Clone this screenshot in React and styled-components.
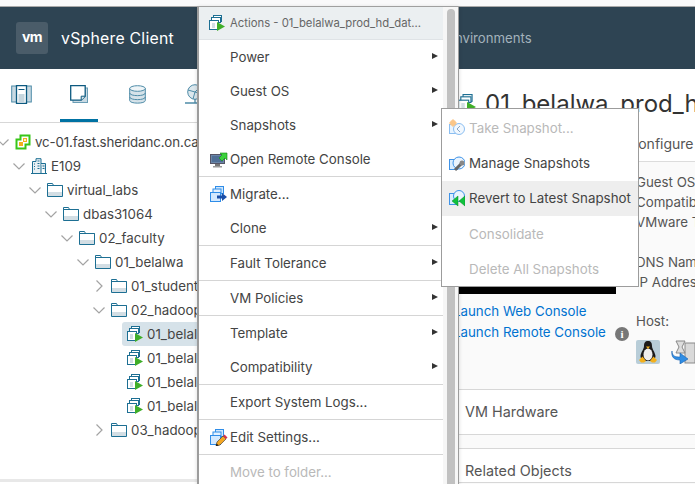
import styled, { createGlobalStyle } from "styled-components";

const GlobalStyle = createGlobalStyle`
  html, body {
    margin: 0;
    padding: 0;
    background: #fff;
  }
  body {
    width: 695px;
    height: 484px;
    overflow: hidden;
    font-family: Inter, "Noto Sans", sans-serif;
    color: #333;
  }
`;

const Page = styled.div`
  position: relative;
  display: flex;
  flex-direction: column;
  width: 695px;
  height: 484px;
  overflow: hidden;
  background: #fff;
`;

const TopStrip = styled.div`
  height: 6px;
  background: #f9f9fa;
  border-bottom: 1px solid #a9a9a9;
`;

const Header = styled.header`
  display: flex;
  align-items: center;
  height: 62px;
  flex-shrink: 0;
  background: #2e4453;
  padding-left: 16px;
`;

const LogoBox = styled.div`
  display: flex;
  align-items: center;
  justify-content: center;
  width: 32px;
  height: 32px;
  padding-bottom: 3px;
  box-sizing: border-box;
  border-radius: 3px;
  background: #4a5c69;
  color: #fff;
  font-size: 14px;
  font-weight: 700;
  letter-spacing: -0.6px;
`;

const Brand = styled.span`
  margin-left: 13px;
  color: #fff;
  font-size: 15.8px;
  letter-spacing: 0.25px;
`;

const HeaderLink = styled.span`
  margin-left: 273px;
  color: #a3b2bb;
  font-size: 13.2px;
`;

const Body = styled.div`
  display: flex;
  flex: 1;
  min-height: 0;
`;

const Sidebar = styled.aside`
  display: flex;
  flex-direction: column;
  width: 197px;
  height: 413px;
  flex-shrink: 0;
  overflow: hidden;
  border-bottom: 3px solid #e8e8e8;
  box-sizing: border-box;
`;

const TabBar = styled.div`
  display: flex;
  height: 54px;
  flex-shrink: 0;
  border-bottom: 1px solid #d7d7d7;
  box-sizing: border-box;
`;

const Tab = styled.div`
  display: flex;
  align-items: center;
  justify-content: center;
  width: 38px;
  margin-right: ${(p) => p.$gap}px;
  margin-left: ${(p) => p.$lead || 0}px;
  border-bottom: 3px solid ${(p) => (p.$active ? "#0072a3" : "transparent")};
  box-sizing: border-box;
  flex-shrink: 0;
`;

const Tree = styled.div`
  display: flex;
  flex-direction: column;
  padding-top: 7px;
`;

const TreeRow = styled.div`
  display: flex;
  align-items: center;
  height: 24px;
  padding-left: ${(p) => p.$level * 16}px;
  white-space: nowrap;
  font-size: 13.3px;
  color: #444;
`;

const Chevron = styled.svg`
  width: 16px;
  height: 16px;
  flex-shrink: 0;
  margin: 0 4.5px 0 -5.5px;
`;

const TreeIcon = styled.span`
  display: flex;
  width: 16px;
  height: 16px;
  margin-right: 4px;
  flex-shrink: 0;
`;

const Label = styled.span`
  line-height: 24px;
  letter-spacing: ${(p) => p.$tight ? "-0.12px" : "0"};
`;

const LeafWrap = styled.div`
  display: flex;
  align-items: center;
  flex: 1;
  height: 24px;
  margin-left: 10px;
  padding-left: 5px;
  background: ${(p) => (p.$selected ? "#d6e2e9" : "transparent")};
  border-radius: 3px 0 0 3px;
`;

const Main = styled.main`
  display: flex;
  flex-direction: column;
  flex: 1;
  min-width: 0;
  height: 416px;
  overflow: hidden;
  padding-left: 256px;
  background: #fafafa;
`;

const TitleBlock = styled.div`
  flex-shrink: 0;
  height: 93px;
  margin-left: -256px;
  padding-left: 261px;
  background: #fff;
  border-bottom: 1px solid #dcdcdc;
  box-sizing: border-box;
`;

const TitleRow = styled.div`
  display: flex;
  align-items: center;
  height: 34px;
  margin-top: 17px;
  white-space: nowrap;
`;

const TitleIcon = styled.span`
  display: flex;
  flex-shrink: 0;
  width: 18px;
  height: 18px;
`;

const Title = styled.h1`
  margin: 0 0 0 9px;
  font-size: 24px;
  font-weight: 400;
  color: #333;
`;

const TabsRow = styled.div`
  margin-top: 15px;
  margin-left: 170px;
  font-size: 14px;
  color: #555;
  white-space: nowrap;
`;

const Summary = styled.section`
  display: flex;
  flex-shrink: 0;
  height: 228px;
  margin-left: -256px;
  padding-left: 256px;
  background: #fafafa;
  border-bottom: 1px solid #d7d7d7;
  box-sizing: border-box;
  white-space: nowrap;
`;

const ConsoleCol = styled.div`
  display: flex;
  flex-direction: column;
  width: 163px;
  flex-shrink: 0;
`;

const Thumb = styled.div`
  height: 132px;
  background: #000;
`;

const ConsoleLink = styled.a`
  display: block;
  height: 21px;
  margin-top: ${(p) => p.$top || 0}px;
  line-height: 21px;
  color: #0072d0;
  font-size: 13.3px;
`;

const InfoDot = styled.span`
  display: flex;
  align-items: center;
  justify-content: center;
  width: 14px;
  height: 14px;
  margin: 165px 0 0 -1px;
  flex-shrink: 0;
  border-radius: 50%;
  background: #777;
  color: #fff;
  font-size: 11px;
  font-weight: 700;
  font-family: "Liberation Serif", serif;
`;

const DetailCol = styled.div`
  display: flex;
  flex-direction: column;
  margin-left: 7px;
  padding-top: 10px;
  font-size: 13.3px;
  color: #555;
`;

const DetailLine = styled.div`
  height: 20.2px;
  line-height: 20.2px;
  margin-bottom: ${(p) => p.$after || 0}px;
`;

const HostIcons = styled.div`
  display: flex;
  gap: 11px;
  margin-top: 9px;
`;

const HostBadge = styled.div`
  width: 24px;
  height: 24px;
  border-radius: 2px;
  background: ${(p) => p.$bg || "transparent"};
`;

const Card = styled.section`
  flex-shrink: 0;
  height: ${(p) => p.$height}px;
  margin: ${(p) => p.$top || 0}px 0 0 -256px;
  padding-left: 268px;
  background: #fff;
  border-bottom: 1px solid #d7d7d7;
  border-top: ${(p) => (p.$lined ? "1px solid #d7d7d7" : "none")};
  box-sizing: border-box;
  line-height: ${(p) => p.$line}px;
  font-size: 14.4px;
  color: #565656;
  white-space: nowrap;
`;

const Menu = styled.div`
  position: absolute;
  left: 197px;
  top: 7px;
  display: flex;
  width: 262px;
  height: 490px;
  background: #f6f6f6;
  border: solid #9c9c9c;
  border-width: 0 1px 0 2px;
  box-sizing: border-box;
  box-shadow: 0 0 4px rgba(0, 0, 0, 0.15);
`;

const MenuList = styled.div`
  display: flex;
  flex-direction: column;
  width: 244px;
  flex-shrink: 0;
  background: #fff;
`;

const MenuTitle = styled.div`
  display: flex;
  align-items: center;
  gap: 5px;
  height: 33px;
  flex-shrink: 0;
  padding-left: 10px;
  background: #ebeff1;
  border-bottom: 1px solid #dfe3e6;
  box-sizing: border-box;
  font-size: 11.3px;
  color: #666;
  white-space: nowrap;
`;

const MenuItem = styled.div`
  position: relative;
  display: flex;
  align-items: center;
  height: 34px;
  flex-shrink: 0;
  padding-left: 31px;
  font-size: 13.3px;
  color: ${(p) => (p.$disabled ? "#b9b9b9" : "#444")};
  white-space: nowrap;
`;

const MenuItemIcon = styled.span`
  position: absolute;
  left: 11px;
  top: 9px;
  display: flex;
  width: 18px;
  height: 17px;
`;

const Arrow = styled.span`
  position: absolute;
  right: 5px;
  top: 13px;
  width: 0;
  height: 0;
  border-left: 6px solid #333;
  border-top: 3.5px solid transparent;
  border-bottom: 3.5px solid transparent;
`;

const Divider = styled.div`
  height: 1px;
  flex-shrink: 0;
  background: #d5d5d5;
`;

const ScrollThumb = styled.div`
  width: 8px;
  height: 100%;
  margin: 2px 0 0 4px;
  border-radius: 4px 4px 0 0;
  background: #c1c1c1;
`;

const SubMenu = styled.div`
  position: absolute;
  left: 441px;
  top: 108px;
  display: flex;
  flex-direction: column;
  width: 198px;
  height: 179px;
  padding-top: 1px;
  background: #fff;
  border: 1px solid #9c9c9c;
  box-sizing: border-box;
`;

const SubItem = styled.div`
  display: flex;
  align-items: center;
  height: 35.4px;
  flex-shrink: 0;
  padding-left: 7px;
  background: ${(p) => (p.$active ? "#eeeeee" : "transparent")};
  font-size: 13.35px;
  color: ${(p) => (p.$disabled ? "#b9b9b9" : "#444")};
  white-space: nowrap;
`;

const SubIcon = styled.span`
  display: flex;
  width: 16px;
  height: 17px;
  margin-right: 4px;
  flex-shrink: 0;
  opacity: ${(p) => (p.$dim ? 0.6 : 1)};
`;

function ChevronMark({ open }) {
  return (
    <Chevron viewBox="0 0 16 16">
      <path
        d={open ? "M2.5 5.5L8 11l5.500-5.500" : "M5.500 2.500L11 8l-5.500 5.500"}
        fill="none"
        stroke="#a3a3a3"
        strokeWidth="1.2"
      />
    </Chevron>
  );
}

function FolderIcon() {
  return (
    <svg width="16" height="16" viewBox="0 0 16 16">
      <path d="M.5 14.500V1.500h5l1 2h9v11z" fill="#fff" stroke="#1d6f93" />
      <rect x="1" y="10" width="14" height="4" fill="#d3dee4" />
      <path d="M.5 3.500h15" stroke="#1d6f93" />
    </svg>
  );
}

function VmIcon({ size = 16 }) {
  return (
    <svg width={size} height={size} viewBox="0 0 16 16">
      <rect x="4.500" y=".5" width="8" height="6" fill="#fff" stroke="#1d6f93" />
      <rect x="2.500" y="2.500" width="9" height="5" fill="#fff" stroke="#1d6f93" />
      <rect x=".5" y="5.500" width="9" height="9" fill="#fff" stroke="#1d6f93" />
      <rect x="3" y="8" width="3" height="5" fill="#d3dee4" />
      <path d="M8 7l8 4.500-8 4.500z" fill="#3fae29" />
    </svg>
  );
}

function DatacenterIcon() {
  return (
    <svg width="16" height="16" viewBox="0 0 16 16">
      <path d="M1.500 15V3.500h3.500V.7h5V15" fill="#e9f0f4" stroke="#1d6f93" />
      <path d="M10 5.500h4.500V15" fill="#dfe8ed" stroke="#1d6f93" />
      <path d="M6.500 3h2M6.500 5.500h2M6.500 8h2M6.500 10.500h2M3 6h1M3 8.500h1M3 11h1M11.500 8h2M11.500 10.500h2" stroke="#1d6f93" />
      <path d="M0 15.500h16" stroke="#1d6f93" />
    </svg>
  );
}

function VcenterIcon() {
  return (
    <svg width="16" height="16" viewBox="0 0 16 16">
      <path d="M5.500 1.500h9v9h-4v4h-9v-9h4z" fill="#fff" stroke="#38c619" strokeWidth="2" />
      <rect x="8" y="4" width="4" height="4" fill="#f3b01c" />
      <rect x="4" y="8" width="4" height="4" fill="#f3b01c" />
      <rect x="9" y="5" width="2" height="2" fill="#fff2c4" />
    </svg>
  );
}

function HostsTabIcon() {
  return (
    <svg width="21" height="19" viewBox="0 0 21 19">
      <rect x=".7" y="1" width="19.600" height="16" fill="#c9dae3" stroke="#4f8ca8" />
      <path d="M5.500 .5h10v18h-10z" fill="#fff" stroke="#0d5a80" strokeWidth="1.300" />
      <rect x="7.500" y="9" width="6" height="8" fill="#c6d6de" />
      <path d="M7.500 4.500h6" stroke="#0d5a80" />
    </svg>
  );
}

function VmsTabIcon() {
  return (
    <svg width="18" height="18" viewBox="0 0 18 18">
      <rect x="3" y="3" width="14.500" height="14.500" fill="#c9dae3" stroke="#6a9db5" />
      <path d="M.7.7h14.500v10.500l-4 4H.7z" fill="#fff" stroke="#0d5a80" strokeWidth="1.300" />
      <path d="M15.200 11.200h-4v4" fill="#d8e4ea" stroke="#0d5a80" />
    </svg>
  );
}

function StorageTabIcon() {
  return (
    <svg width="17" height="19" viewBox="0 0 17 19">
      <path d="M.7 3.500v12c0 3.500 15.600 3.500 15.600 0v-12z" fill="#d5e2e9" stroke="#4f8ca8" />
      <ellipse cx="8.500" cy="3.500" rx="7.800" ry="2.800" fill="#eef4f7" stroke="#4f8ca8" />
      <path d="M.7 8c0 3.500 15.600 3.500 15.600 0M.7 12c0 3.500 15.600 3.500 15.600 0" fill="none" stroke="#4f8ca8" />
    </svg>
  );
}

function NetworkTabIcon() {
  return (
    <svg width="20" height="20" viewBox="0 0 20 20">
      <circle cx="10" cy="8" r="7.300" fill="#dbe7ed" stroke="#4f8ca8" />
      <path d="M3 6l7 2 5-5M10 8l-2 7M10 8l7 2" fill="none" stroke="#4f8ca8" />
      <path d="M0 19h20M10 15v4" stroke="#4f8ca8" strokeWidth="1.300" />
    </svg>
  );
}

function BlueStack() {
  return (
    <>
      <rect x="5.500" y=".5" width="8" height="7" fill="#cfe6fd" stroke="#2f8de8" />
      <rect x="3" y="3" width="8" height="6" fill="#e4f1ff" stroke="#2f8de8" />
      <rect x=".5" y="6.500" width="10" height="9" fill="#d3e9ff" stroke="#2f8de8" />
    </>
  );
}

function ConsoleIcon() {
  return (
    <svg width="18" height="17" viewBox="0 0 18 17">
      <rect x=".5" y="3.500" width="14" height="9" fill="#6a86a8" stroke="#556" />
      <rect x="2" y="5" width="11" height="6" fill="#4f6f96" />
      <rect x="5" y="13" width="5" height="2" fill="#777" />
      <rect x="3" y="15" width="9" height="1.500" fill="#999" />
      <path d="M9 7l3-3-2-2h7v7l-2-2-3 3z" fill="#3bd13b" stroke="#128a12" strokeWidth=".6" />
    </svg>
  );
}

function MigrateIcon() {
  return (
    <svg width="18" height="17" viewBox="0 0 18 17">
      <BlueStack />
      <path d="M7 9.500h5V7l5 4-5 4v-2.500H7z" fill="#1a4fa8" />
    </svg>
  );
}

function EditIcon() {
  return (
    <svg width="18" height="17" viewBox="0 0 18 17">
      <BlueStack />
      <path d="M7 13l6-6 3 3-6 6-4 1z" fill="#f4a623" stroke="#333" strokeWidth=".6" />
      <path d="M13 7l1.500-1.500 3 3L16 10z" fill="#d8324a" />
      <path d="M6 17l.6-2.500 2 2z" fill="#111" />
    </svg>
  );
}

function TakeIcon() {
  return (
    <svg width="16" height="17" viewBox="0 0 16 17">
      <rect x=".5" y="5.500" width="7" height="9" fill="#d9edff" stroke="#3f93e8" />
      <circle cx="10" cy="10" r="5.500" fill="#eaf4fe" stroke="#3f93e8" />
      <path d="M11 7l-3 3 3 3" fill="none" stroke="#3b6ea5" />
      <circle cx="4" cy="4" r="3" fill="#f9a13a" />
      <path d="M4 0v8M0 4h8" stroke="#f9a13a" />
    </svg>
  );
}

function ManageIcon() {
  return (
    <svg width="16" height="17" viewBox="0 0 16 17">
      <rect x=".5" y="4.500" width="8" height="10" fill="#d9edff" stroke="#3f93e8" />
      <circle cx="10" cy="8" r="6" fill="#eaf4fe" stroke="#3f93e8" />
      <path d="M6 15l6-6" stroke="#666" strokeWidth="3" />
      <circle cx="13" cy="8" r="2.500" fill="#888" />
    </svg>
  );
}

function RevertIcon() {
  return (
    <svg width="16" height="17" viewBox="0 0 16 17">
      <rect x=".5" y="3.500" width="8" height="11" fill="#d9edff" stroke="#3f93e8" />
      <circle cx="10" cy="6" r="5.500" fill="#eaf4fe" stroke="#3f93e8" />
      <path d="M9 6v10L3 11zM16 6v10l-6-5z" fill="#0fc23c" stroke="#0a8a2a" strokeWidth=".5" />
    </svg>
  );
}

function PenguinIcon() {
  return (
    <svg width="24" height="24" viewBox="0 0 24 24">
      <path d="M12 1c-3 0-4 2-4 5 0 3-3 6-3.500 10 0 3 2 5 7.500 5s7.500-2 7.500-5C19 12 16 9 16 6c0-3-1-5-4-5z" fill="#1b1b1b" />
      <ellipse cx="12" cy="14.500" rx="4.500" ry="6" fill="#efefef" />
      <path d="M10 6.500h4l-2 2.500z" fill="#f3b01c" />
      <path d="M3 20l3.500-3.500L10 21l-2 1.500H5zM21 20l-3.500-3.500L14 21l2 1.500h3z" fill="#f3b01c" />
    </svg>
  );
}

function MigrateHostIcon() {
  return (
    <svg width="24" height="24" viewBox="0 0 24 24">
      <rect x="14" y="3" width="10" height="20" fill="#d9d9d9" stroke="#8a8a8a" />
      <path d="M5 1h9l-3 6 3 6H5l3-6z" fill="#ddd" stroke="#888" />
      <path d="M1 11c0 5 3 6 8 6v-4l8 6-8 5v-4C3 20 0 17 1 11z" fill="#2f8de4" stroke="#1a62b0" strokeWidth=".6" />
    </svg>
  );
}

const treeRows = [
  { level: 0, name: "vc-01.fast.sheridanc.on.ca", icon: <VcenterIcon />, open: true, tight: true },
  { level: 1, name: "E109", icon: <DatacenterIcon />, open: true },
  { level: 2, name: "virtual_labs", icon: <FolderIcon />, open: true },
  { level: 3, name: "dbas31064", icon: <FolderIcon />, open: true },
  { level: 4, name: "02_faculty", icon: <FolderIcon />, open: true },
  { level: 5, name: "01_belalwa", icon: <FolderIcon />, open: true },
  { level: 6, name: "01_students", icon: <FolderIcon />, open: false },
  { level: 6, name: "02_hadoop", icon: <FolderIcon />, open: true },
  { level: 7, name: "01_belalwa_prod_hd", icon: <VmIcon />, leaf: true, selected: true },
  { level: 7, name: "01_belalwa_prod_hd", icon: <VmIcon />, leaf: true },
  { level: 7, name: "01_belalwa_prod_hd", icon: <VmIcon />, leaf: true },
  { level: 7, name: "01_belalwa_prod_hd", icon: <VmIcon />, leaf: true },
  { level: 6, name: "03_hadoop", icon: <FolderIcon />, open: false },
];

// null marks a separator line
const menuItems = [
  { name: "Power", arrow: true },
  { name: "Guest OS", arrow: true },
  { name: "Snapshots", arrow: true },
  { name: "Open Remote Console", icon: <ConsoleIcon /> },
  null,
  { name: "Migrate...", icon: <MigrateIcon /> },
  { name: "Clone", arrow: true },
  null,
  { name: "Fault Tolerance", arrow: true },
  null,
  { name: "VM Policies", arrow: true },
  null,
  { name: "Template", arrow: true },
  { name: "Compatibility", arrow: true },
  null,
  { name: "Export System Logs..." },
  null,
  { name: "Edit Settings...", icon: <EditIcon /> },
  null,
  { name: "Move to folder...", disabled: true },
];

const snapshotItems = [
  { name: "Take Snapshot...", icon: <TakeIcon />, disabled: true, dim: true },
  { name: "Manage Snapshots", icon: <ManageIcon /> },
  { name: "Revert to Latest Snapshot", icon: <RevertIcon />, active: true },
  { name: "Consolidate", disabled: true },
  { name: "Delete All Snapshots", disabled: true },
];

function App() {
  return (
    <Page>
      <GlobalStyle />
      <TopStrip />
      <Header>
        <LogoBox>vm</LogoBox>
        <Brand>vSphere Client</Brand>
        <HeaderLink>Environments</HeaderLink>
      </Header>
      <Body>
        <Sidebar>
          <TabBar>
            <Tab $lead={2} $gap={20}>
              <HostsTabIcon />
            </Tab>
            <Tab $active $gap={20}>
              <VmsTabIcon />
            </Tab>
            <Tab $gap={20}>
              <StorageTabIcon />
            </Tab>
            <Tab $gap={0}>
              <NetworkTabIcon />
            </Tab>
          </TabBar>
          <Tree>
            {treeRows.map((row, i) => (
              <TreeRow key={i} $level={row.level}>
                {row.leaf ? (
                  <LeafWrap $selected={row.selected}>
                    <TreeIcon>{row.icon}</TreeIcon>
                    <Label>{row.name}</Label>
                  </LeafWrap>
                ) : (
                  <>
                    <ChevronMark open={row.open} />
                    <TreeIcon>{row.icon}</TreeIcon>
                    <Label $tight={row.tight}>{row.name}</Label>
                  </>
                )}
              </TreeRow>
            ))}
          </Tree>
        </Sidebar>
        <Main>
          <TitleBlock>
            <TitleRow>
              <TitleIcon>
                <VmIcon size={18} />
              </TitleIcon>
              <Title>01_belalwa_prod_hd_data</Title>
            </TitleRow>
            <TabsRow>Configure</TabsRow>
          </TitleBlock>
          <Summary>
            <ConsoleCol>
              <Thumb />
              <ConsoleLink $top={7}>Launch Web Console</ConsoleLink>
              <ConsoleLink>Launch Remote Console</ConsoleLink>
            </ConsoleCol>
            <InfoDot>i</InfoDot>
            <DetailCol>
              <DetailLine>Guest OS</DetailLine>
              <DetailLine>Compatibility</DetailLine>
              <DetailLine $after={19}>VMware Tools</DetailLine>
              <DetailLine>DNS Name</DetailLine>
              <DetailLine $after={19}>IP Addresses</DetailLine>
              <DetailLine>Host:</DetailLine>
              <HostIcons>
                <HostBadge $bg="#b8cdd8">
                  <PenguinIcon />
                </HostBadge>
                <HostBadge>
                  <MigrateHostIcon />
                </HostBadge>
              </HostIcons>
            </DetailCol>
          </Summary>
          <Card $height={45} $line={43}>
            VM Hardware
          </Card>
          <Card $height={35} $line={44} $top={13} $lined>
            Related Objects
          </Card>
        </Main>
      </Body>
      <Menu>
        <MenuList>
          <MenuTitle>
            <VmIcon />
            <span>Actions - 01_belalwa_prod_hd_dat...</span>
          </MenuTitle>
          {menuItems.map((item, i) =>
            item ? (
              <MenuItem key={i} $disabled={item.disabled}>
                {item.icon && <MenuItemIcon>{item.icon}</MenuItemIcon>}
                {item.name}
                {item.arrow && <Arrow />}
              </MenuItem>
            ) : (
              <Divider key={i} />
            )
          )}
        </MenuList>
        <ScrollThumb />
      </Menu>
      <SubMenu>
        {snapshotItems.map((item) => (
          <SubItem key={item.name} $active={item.active} $disabled={item.disabled}>
            <SubIcon $dim={item.dim}>{item.icon}</SubIcon>
            {item.name}
          </SubItem>
        ))}
      </SubMenu>
    </Page>
  );
}

export default App;
